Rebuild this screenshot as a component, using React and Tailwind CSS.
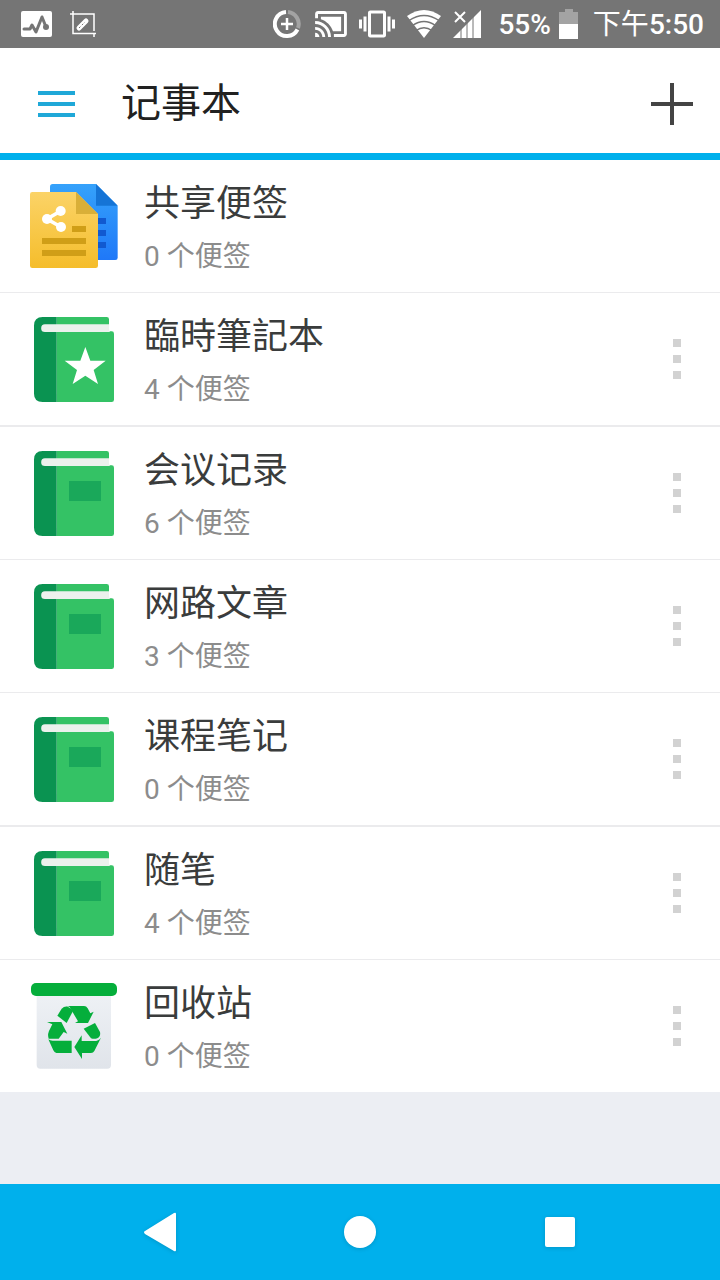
const notebooks = [
  { id: 1, name: "共享便签", count: 0, icon: "shared" },
  { id: 2, name: "臨時筆記本", count: 4, icon: "starred", menu: true, thick: true },
  { id: 3, name: "会议记录", count: 6, icon: "book", menu: true },
  { id: 4, name: "网路文章", count: 3, icon: "book", menu: true },
  { id: 5, name: "课程笔记", count: 0, icon: "book", menu: true, thick: true },
  { id: 6, name: "随笔", count: 4, icon: "book", menu: true },
  { id: 7, name: "回收站", count: 0, icon: "trash", menu: true },
];

const SharedIcon = () => (
  <svg className="size-[88px]" viewBox="60 36 264 264" aria-hidden="true">
    <defs>
      <linearGradient id="sharedBlue" x1="0" y1="0" x2="0" y2="1">
        <stop offset="0" stopColor="#35a2fb" />
        <stop offset="1" stopColor="#1f78f8" />
      </linearGradient>
      <linearGradient id="sharedYellow" x1="0" y1="0" x2="0" y2="1">
        <stop offset="0" stopColor="#fbd367" />
        <stop offset="1" stopColor="#f5bd2b" />
      </linearGradient>
    </defs>
    <path d="M128 42h130l65 65v156q0 7-7 7H120V50q0-8 8-8z" fill="url(#sharedBlue)" />
    <path d="M258 42l65 65h-65z" fill="#1574d6" />
    <path d="M240 144h48v18h-48zM240 180h48v18h-48zM240 216h48v18h-48z" fill="#1159d0" />
    <path d="M67 66h131l66 66v155q0 7-7 7H67q-7 0-7-7V73q0-7 7-7z" fill="url(#sharedYellow)" />
    <path d="M198 66l66 66h-66z" fill="#d9af38" />
    <path d="M186 168h42v18h-42zM96 204h132v18H96zM96 240h132v18H96z" fill="#d09e17" />
    <path d="M152 123L111 147l42 24" fill="none" stroke="#fff" strokeWidth="11" />
    <circle cx="152" cy="123" r="15" fill="#fff" />
    <circle cx="111" cy="147" r="15" fill="#fff" />
    <circle cx="153" cy="171" r="15" fill="#fff" />
  </svg>
);

const BookIcon = ({ starred }) => (
  <svg className="size-[88px]" viewBox="60 45 264 264" aria-hidden="true">
    <path d="M140 51h150q7 0 7 7v36h8q7 0 7 7v198q0 7-7 7H140z" fill="#34c265" />
    <path d="M140 51H98q-26 0-26 26v204q0 25 26 25h42z" fill="#0a9351" />
    <path d="M297 73H105a11 11 0 0 0 0 23h195q-3-4-3-10z" fill="#ecf1ed" />
    {starred ? (
      <path
        d="M226 141l15 41h46l-36 28 13 42-38-25-38 25 13-42-37-28h47z"
        fill="#fff"
      />
    ) : (
      <path d="M177 141h96v60h-96z" fill="#1aa85a" />
    )}
  </svg>
);

const TrashIcon = () => (
  <svg className="size-[88px]" viewBox="60 66 264 264" aria-hidden="true">
    <defs>
      <linearGradient id="binBody" x1="0" y1="0" x2="0" y2="1">
        <stop offset="0" stopColor="#eef1f5" />
        <stop offset="1" stopColor="#e0e4ea" />
      </linearGradient>
    </defs>
    <path d="M80 100h223v215q0 11-11 11H91q-11 0-11-11z" fill="url(#binBody)" />
    <rect x="63" y="69" width="258" height="39" rx="15" fill="#05ae3b" />
    <g fill="#05ae3b">
      <path d="M166 138h56q7 0 11 7l8 15 10-5-17 34h-39l9-5-25-43q-3-3-13-3z" />
      <path d="M142 167l13-21q8-8 18-6 9 2 16 13l-19 36z" />
      <path d="M111 186h43l18 35-11-5-15 20h-30q-5-15 4-29l7-14z" />
      <path d="M115 238q6 5 16 4h54v37h-46q-5 0-9-8z" />
      <path d="M221 206l34-17 15 27q3 13-8 19-10 3-19 0z" />
      <path d="M273 233l-20 40q-3 6-10 6h-27v18l-23-36 22-35v17h37q14 0 21-10z" />
    </g>
  </svg>
);

const NotebookIcon = ({ type }) => {
  if (type === "shared") return <SharedIcon />;
  if (type === "trash") return <TrashIcon />;
  return <BookIcon starred={type === "starred"} />;
};

const StatusBar = () => (
  <div className="flex h-12 items-center justify-between bg-[#757575] pl-5 pr-4 text-white">
    <div className="flex items-center gap-[18px]">
      <svg className="h-[26px] w-8" viewBox="0 0 32 26" aria-hidden="true">
        <rect x="1" width="31" height="26" rx="2" fill="#fff" />
        <path
          d="M4 18h6l2-4 4 7 6-15 4 10"
          fill="none"
          stroke="#757575"
          strokeWidth="3"
          strokeLinecap="round"
          strokeLinejoin="round"
        />
        <circle cx="26" cy="16" r="3" fill="#757575" />
      </svg>
      <svg className="size-[26px]" viewBox="0 0 26 26" fill="none" stroke="#fff" aria-hidden="true">
        <path d="M0 3h24v17M3 0v22.500h23M24 23v3" strokeWidth="1.500" />
        <path d="M9 17l7-7" strokeWidth="5" strokeLinecap="round" />
        <path d="M9 17l6-6" stroke="#757575" strokeDasharray="2 2" />
      </svg>
    </div>

    <div className="flex items-center">
      <svg className="mr-3.5 size-7" viewBox="0 0 28 28" fill="none" stroke="#fff" aria-hidden="true">
        <path d="M15 2a12 12 0 0 1 10 16" stroke="#a3a3a3" strokeWidth="4" />
        <path d="M13 2a12 12 0 1 0 11.500 17.500" strokeWidth="4" />
        <path d="M14 8v12M8 14h12" strokeWidth="2.500" />
      </svg>
      <svg className="mr-3 h-[26px] w-8" viewBox="1 3 22 18" fill="#fff" aria-hidden="true">
        <path d="M1 18v3h3c0-1.660-1.340-3-3-3zm0-4v2c2.760 0 5 2.240 5 5h2c0-3.870-3.130-7-7-7zm18-7H5v1.630c3.960 1.280 7.090 4.410 8.370 8.370H19V7zM1 10v2c4.970 0 9 4.030 9 9h2c0-6.080-4.930-11-11-11zm20-7H3c-1.100 0-2 .9-2 2v3h2V5h18v14h-7v2h7c1.100 0 2-.9 2-2V5c0-1.100-.9-2-2-2z" />
      </svg>
      <svg className="mr-3 size-9" viewBox="0 0 24 24" fill="#fff" aria-hidden="true">
        <path d="M0 15h2V9H0v6zm3 2h2V7H3v10zm19-8v6h2V9h-2zm-3 8h2V7h-2v10zM16.500 3h-9C6.670 3 6 3.670 6 4.500v15c0 .83.670 1.500 1.500 1.500h9c.83 0 1.500-.670 1.500-1.500v-15c0-.83-.670-1.500-1.500-1.500zM16 19H8V5h8v14z" />
      </svg>
      <svg className="mr-3 h-7 w-[34px]" viewBox="0 0 34 28" aria-hidden="true">
        <path d="M0 6q17-12 34 0L17 28z" fill="#fff" />
        <path
          d="M2 10.500q15-10 30 0M5.500 15.500q11.500-8 23 0M9 20.500q8-5.500 16 0"
          fill="none"
          stroke="#757575"
          strokeWidth="1.500"
        />
      </svg>
      <svg className="mr-[17px] size-7" viewBox="0 0 28 28" aria-hidden="true">
        <path d="M28 0v28H0z" fill="#fff" />
        <path d="M8 18v10M14 12v16M20 6v22" stroke="#757575" />
        <path d="M2 2l10 10M12 2L2 12" stroke="#fff" strokeWidth="2" />
      </svg>
      <span className="mr-2 pt-0.5 text-[28px] font-medium leading-9">55%</span>
      <svg className="mr-3.5 h-[30px] w-5" viewBox="0 0 20 30" aria-hidden="true">
        <path d="M6 0h8v3h5v12H0V3h6z" fill="#a3a3a3" />
        <path d="M0 15h19v15H0z" fill="#fff" />
      </svg>
      <span className="pt-0.5 text-[28px] leading-9">
        下午<span className="font-medium">5:50</span>
      </span>
    </div>
  </div>
);

const Header = () => (
  <header className="flex h-28 items-center border-b-[7px] border-[#00b0ec] bg-white pt-1.5 pl-[38px] pr-[27px]">
    <button type="button" aria-label="菜单" className="flex flex-col gap-[7px]">
      <span className="h-1 w-[37px] bg-[#1fa8d8]" />
      <span className="h-1 w-[37px] bg-[#1fa8d8]" />
      <span className="h-1 w-[37px] bg-[#1fa8d8]" />
    </button>
    <h1 className="ml-[46px] flex-1 text-[40px] leading-[56px] text-[#212121]">记事本</h1>
    <button type="button" aria-label="新建">
      <svg className="size-[42px]" viewBox="0 0 42 42" stroke="#444" strokeWidth="4" aria-hidden="true">
        <path d="M21 0v42M0 21h42" />
      </svg>
    </button>
  </header>
);

const NotebookRow = ({ notebook }) => (
  <li
    className={`flex items-center border-[#ebebed] bg-white pl-[30px] pr-7 ${
      notebook.thick ? "border-b-2" : "border-b last:border-b-0"
    }`}
  >
    <NotebookIcon type={notebook.icon} />
    <div className="ml-[26px] flex-1 pt-4 pb-2.5">
      <h2 className="text-[36px] leading-[56px] text-[#3a3c3c]">{notebook.name}</h2>
      <p className="text-[28px] leading-[50px] text-[#8c8c8c]">{notebook.count} 个便签</p>
    </div>
    {notebook.menu && (
      <button type="button" aria-label="更多" className="flex flex-col gap-2 px-[11px] py-3">
        <span className="size-2 bg-[#d2d2d2]" />
        <span className="size-2 bg-[#d2d2d2]" />
        <span className="size-2 bg-[#d2d2d2]" />
      </button>
    )}
  </li>
);

const NavBar = () => (
  <nav className="flex h-24 items-center justify-center gap-[152px] bg-[#00b0ec]">
    <button type="button" aria-label="返回">
      <svg className="size-12 drop-shadow-sm" viewBox="0 0 48 48" fill="#fff" aria-hidden="true">
        <path d="M38 5q2-1 2 1v36q0 2-2 1L9 26q-2-2 0-3z" />
      </svg>
    </button>
    <button type="button" aria-label="主页">
      <svg className="size-12 drop-shadow-sm" viewBox="0 0 48 48" fill="#fff" aria-hidden="true">
        <circle cx="24" cy="24" r="16" />
      </svg>
    </button>
    <button type="button" aria-label="最近任务">
      <svg className="size-12 drop-shadow-sm" viewBox="0 0 48 48" fill="#fff" aria-hidden="true">
        <rect x="9" y="9" width="30" height="30" rx="2" />
      </svg>
    </button>
  </nav>
);

const App = () => {
  return (
    <div className="flex min-h-screen flex-col bg-[#eceef3] font-[Roboto,'Noto_Sans_CJK_SC',sans-serif]">
      <StatusBar />
      <Header />
      <main className="flex-1">
        <ul>
          {notebooks.map((notebook) => (
            <NotebookRow key={notebook.id} notebook={notebook} />
          ))}
        </ul>
      </main>
      <NavBar />
    </div>
  );
};

export default App;
